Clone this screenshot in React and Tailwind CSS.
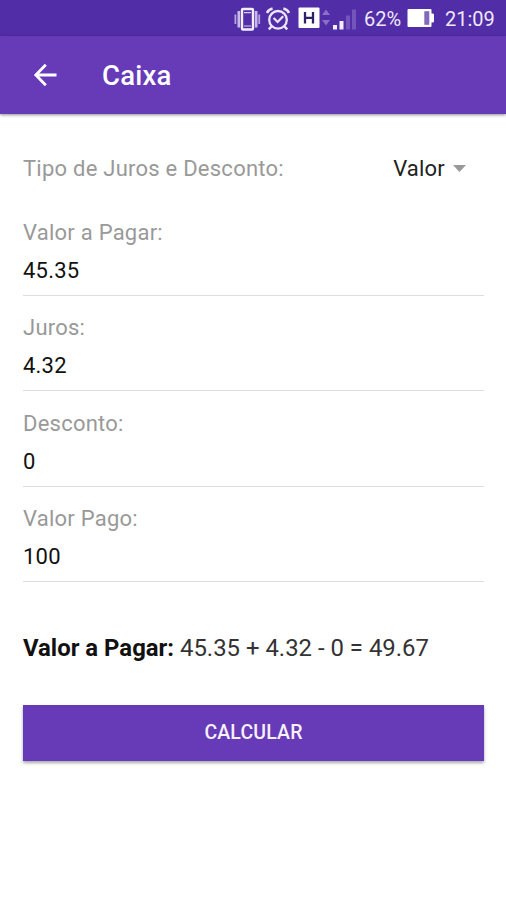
import React, { useState } from "react";

const VibrateIcon = () => (
  <svg width="28" height="24" viewBox="0 0 28 24" fill="none">
    <rect x="9" y="2" width="11" height="20.5" rx="1" stroke="#f3eefb" strokeWidth="2.4" />
    <path d="M11 5.6h7M11 19h7" stroke="#d9cdf0" strokeWidth="1.2" />
    <path d="M5.8 4v16.5M23.2 4v16.5" stroke="#c9baea" strokeWidth="2.6" />
    <path d="M2.4 7.5v9.5M26.2 7.5v9.5" stroke="#b7a3e0" strokeWidth="1.8" />
  </svg>
);

const AlarmIcon = () => (
  <svg width="24" height="24" viewBox="0 0 24 24" fill="none" stroke="#ece5f8">
    <circle cx="12" cy="12.8" r="8.8" strokeWidth="2.3" />
    <path d="M1 6Q2.6 2.6 6.6 1.6M23 6Q21.4 2.6 17.4 1.6" strokeWidth="2.6" />
    <path d="M5.6 19.4l-2.8 3M18.4 19.4l2.8 3" strokeWidth="2.4" />
    <path d="M7.6 11l4 4 5.6-5.8" strokeWidth="2.2" />
  </svg>
);

const NetworkIcon = () => (
  <svg width="59" height="24" viewBox="0 0 59 24">
    <rect x="0.5" y="0.5" width="21" height="20.5" rx="1" fill="#fff" />
    <path d="M7 5v11.6M15 5v11.6M7 10.8h8" stroke="#2f2168" strokeWidth="2.3" fill="none" />
    <path d="M24 8l4-5.5L32 8zM24 13l4 5.5 4-5.5z" fill="#8a70c6" />
    <path d="M35 18h4v4.5h-4z" fill="#f3eefb" />
    <path d="M41.5 14h4v8.5h-4z" fill="#f3eefb" />
    <path d="M48 8.5h4v14h-4zM54 2.5h4v20h-4z" fill="#7455ba" />
  </svg>
);

const BatteryIcon = () => (
  <svg width="28" height="20" viewBox="0 0 28 20">
    <path d="M1.5 1h22a1 1 0 0 1 1 1v3.5h1.2a1.3 1.3 0 0 1 1.3 1.3v6.4a1.3 1.3 0 0 1-1.3 1.3h-1.2V18a1 1 0 0 1-1 1h-22a1 1 0 0 1-1-1V2a1 1 0 0 1 1-1z" fill="#fff" />
    <path d="M17.3 3.2h5v13.6h-5z" fill="#8168bd" />
  </svg>
);

const StatusBar = () => (
  <div className="h-9 bg-[#512da8] flex items-start text-[#eee8f9] pl-[233px]">
    <div className="mt-[7px]"><VibrateIcon /></div>
    <div className="mt-[7px] ml-[5px]"><AlarmIcon /></div>
    <div className="mt-[7px] ml-2"><NetworkIcon /></div>
    <span className="ml-[7px] w-[43px] text-[20px] leading-[39px] whitespace-nowrap">62%</span>
    <div className="mt-2"><BatteryIcon /></div>
    <span className="ml-[10px] text-[20px] leading-[39px] whitespace-nowrap">21:09</span>
  </div>
);

const Header = () => (
  <header className="relative h-[78px] bg-[#673ab7] flex items-center shadow-[0_1px_3px_rgba(0,0,0,0.45)]">
    <button className="ml-[33px] w-6 h-6">
      <svg width="24" height="24" viewBox="0 0 24 24" fill="none" stroke="#fff" strokeWidth="2.8">
        <path d="M23.5 12H3M12.8 1.8L2.8 12l10 10.2" />
      </svg>
    </button>
    <h1 className="ml-[45px] pt-px text-[27.5px] tracking-[0.2px] font-medium text-white">Caixa</h1>
  </header>
);

const Field = ({ label, value, onChange }) => (
  <label className="block h-[95.5px]">
    <span className="block h-[38px] leading-[39px] text-[#999] tracking-[0.24px]">{label}</span>
    <input
      className="block w-full h-[45px] pb-[5px] text-[#111] border-b border-[#dedede] outline-none tracking-[0.2px]"
      value={value}
      onChange={(e) => onChange(e.target.value)}
    />
  </label>
);

const App = () => {
  const [values, setValues] = useState({
    pagar: "45.35",
    juros: "4.32",
    desconto: "0",
    pago: "100",
  });

  const fields = [
    { name: "pagar", label: "Valor a Pagar:" },
    { name: "juros", label: "Juros:" },
    { name: "desconto", label: "Desconto:" },
    { name: "pago", label: "Valor Pago:" },
  ];

  const total = Number(values.pagar) + Number(values.juros) - Number(values.desconto);

  return (
    <div className="min-h-screen bg-white font-[Roboto,sans-serif] text-[22px]">
      <StatusBar />
      <Header />
      <main className="pl-[23px] pr-[22px] pt-[34px]">
        <div className="flex items-center h-10 mb-[24.6px]">
          <span className="text-[#999] tracking-[0.24px]">Tipo de Juros e Desconto:</span>
          <button className="ml-auto mr-[18px] flex items-center text-[#222] tracking-[0.2px]">
            Valor
            <svg className="ml-2" width="13" height="7" viewBox="0 0 13 7">
              <path d="M0 0h13L6.5 7z" fill="#999" />
            </svg>
          </button>
        </div>

        {fields.map(field => (
          <Field
            key={field.name}
            label={field.label}
            value={values[field.name]}
            onChange={(value) => setValues({ ...values, [field.name]: value })}
          />
        ))}

        <p className="mt-[37px] leading-[32px] text-[#111] text-[23.9px] whitespace-nowrap">
          <b className="font-bold">Valor a Pagar:</b>{" "}
          <span className="text-[#333]">{values.pagar} + {values.juros} - {values.desconto} = {total.toFixed(2)}</span>
        </p>
        <button className="mt-[41.4px] w-full h-14 pb-px bg-[#673ab7] text-[#f6f1fc] text-[19.5px] tracking-[0.15px] font-medium uppercase shadow-[0_2px_3px_rgba(0,0,0,0.35)]">
          Calcular
        </button>
      </main>
    </div>
  );
};

export default App;
